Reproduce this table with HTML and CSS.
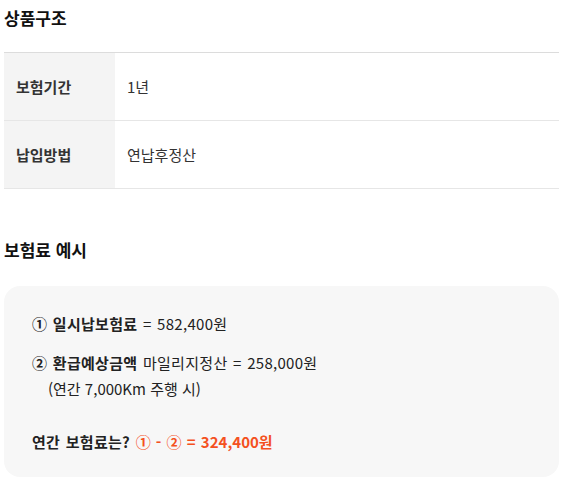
FILE: index.html
```html
<!DOCTYPE html>
<html lang="ko">
<head>
  <meta charset="UTF-8">
  <title>상품구조</title>
  <meta name="viewport" content="width=device-width, initial-scale=1.0">
  <link rel="stylesheet" href="styles.css">
</head>
<body>

<div class="wrap">
  <h2 class="title">상품구조</h2>

  <table class="info-table">
    <tr>
      <th>보험기간</th>
      <td>1년</td>
    </tr>
    <tr>
      <th>납입방법</th>
      <td>연납후정산</td>
    </tr>
  </table>

  <h2 class="title title-second">보험료 예시</h2>

  <div class="example-box">
    <p><b>① 일시납보험료</b> = 582,400원</p>
    <p class="second"><b>② 환급예상금액</b> 마일리지정산 = 258,000원<br>
      <span class="note">(연간 7,000Km 주행 시)</span></p>
    <p class="total"><b>연간 보험료는?</b> <b class="accent">① - ② = 324,400원</b></p>
  </div>
</div>

</body>
</html>
```

FILE: styles.css
```css
body {
  margin: 0;
  font-family: "Noto Sans CJK KR", "Noto Sans", sans-serif;
  color: #222;
  background: #fff;
}
.wrap {
  padding: 0 3px 0 4px;
}
.title {
  margin: 0;
  padding-top: 6px;
  font-size: 17px;
  line-height: 24px;
  font-weight: bold;
  color: #111;
}
.title-second {
  padding-top: 0;
  margin-top: 49px;
}
.info-table {
  width: 100%;
  margin-top: 22px;
  border-collapse: collapse;
  border-top: 1px solid #dcdcdc;
  font-size: 15px;
  color: #333;
}
.info-table tr {
  border-bottom: 1px solid #e6e6e6;
}
.info-table th,
.info-table td {
  height: 67px;
  padding: 0 12px;
  text-align: left;
  vertical-align: middle;
}
.info-table th {
  width: 87px;
  background: #f4f4f4;
  font-weight: bold;
}
.info-table td {
  font-weight: normal;
}
.example-box {
  margin-top: 24px;
  padding: 25px 28px 22px;
  background: #f7f7f7;
  border-radius: 16px;
  font-size: 15px;
  line-height: 26px;
  color: #222;
  letter-spacing: 0.3px;
  word-spacing: 1px;
}
.example-box p {
  margin: 0;
}
.example-box .second {
  margin-top: 13px;
}
.example-box .note {
  padding-left: 16px;
  letter-spacing: 0;
  word-spacing: 0;
}
.example-box .total {
  margin-top: 27px;
}
.accent {
  color: #f4511e;
  letter-spacing: 0;
}
```
